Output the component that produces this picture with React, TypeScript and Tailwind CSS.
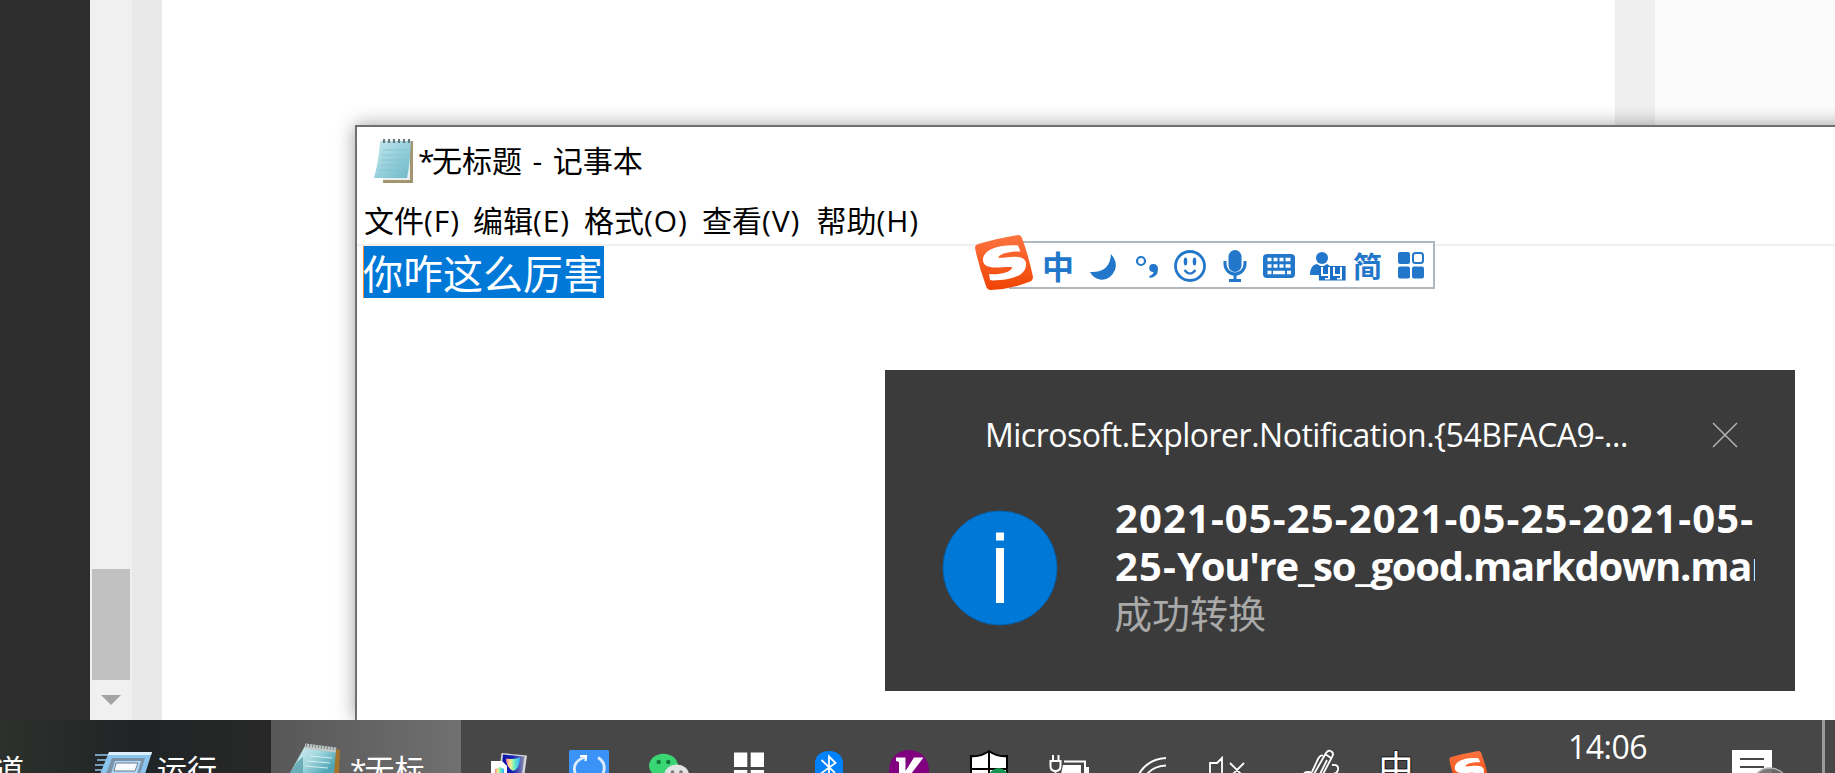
import type { ReactNode } from "react";

const UI_FONT = "font-['Open_Sans','Noto_Sans_CJK_SC',sans-serif]";

function NotepadIcon() {
  return (
    <svg className="size-full" viewBox="0 0 40 46">
      <defs>
        <linearGradient id="pad" x1="0" y1="0" x2="1" y2="1">
          <stop offset="0" stopColor="#c6e8ee" />
          <stop offset="0.5" stopColor="#97d0dc" />
          <stop offset="1" stopColor="#6db8c8" />
        </linearGradient>
      </defs>
      <path d="M10 4 L39 3 L39 45 L9 45 Z" fill="#a3956f" />
      <path d="M8 4 L36 4 L36 42 L9 42 Z" fill="#e8efee" />
      <path d="M6 3 L37 3 Q36 26 33 40 L0 40 Q5 22 6 3Z" fill="url(#pad)" />
      <path d="M9 12H33M8 17H32M8 22H32M7 27H31M6 32H31" stroke="#7fbecb" strokeWidth="0.7" />
      <path d="M10 1v4M15 1v4M20 1v4M25 1v4M30 1v4M35 1v4" stroke="#6b757c" strokeWidth="2.2" />
    </svg>
  );
}

function SogouLogo() {
  return (
    <svg className="size-full" viewBox="0 0 58 56">
      <defs>
        <linearGradient id="sogou" x1="0" y1="0" x2="0" y2="1">
          <stop offset="0" stopColor="#fd7440" />
          <stop offset="1" stopColor="#f04304" />
        </linearGradient>
      </defs>
      <path
        d="M3 9 Q24 3 43 0 Q46 0 47 3 Q54 22 58 42 Q58 46 54 47 Q36 54 16 55 Q12 55 11 51 Q4 32 0 13 Q0 10 3 9Z"
        fill="url(#sogou)"
      />
      <path
        d="M43 10.500 L45.500 16.500 C36 16 26 18 23 22.500 C29 24 49 17 51 28 C52 41 36 45 18 45.500 L15 45 L14 39 C23 40 35 38 37.500 32.500 C32 30 10 37 8 26 C7 14 25 9 43 10.500Z"
        fill="#fff"
      />
    </svg>
  );
}

function ImeBar() {
  return (
    <div className="absolute left-[975px] top-[235px] h-[56px] w-[460px]">
      <div className="ml-[34px] mt-[6px] flex h-[48px] w-[426px] border-2 border-[#b1b7bf] bg-white text-[#2277ca]">
        <div className="flex w-[94px] items-center pl-[31px] font-['Noto_Sans_CJK_SC',sans-serif] text-[32px] font-bold leading-[44px]">
          中
        </div>
        <svg className="-ml-[15px] h-[44px] w-[243px] shrink-0" viewBox="1090 243 243 44" fill="#2277ca">
          <path d="M1111 254 Q1118 262 1115 270 Q1110 281 1100 279.500 Q1093 278 1090 272 Q1110 273 1111 254Z" />
          <circle cx="1141" cy="261" r="4" fill="none" stroke="#2277ca" strokeWidth="2.2" />
          <path d="M1153 264 a4.5 4.5 0 0 1 5 5 Q1158 277 1150 278 L1149 276 Q1153 275 1153.500 272 a4 4 0 0 1-.5-8Z" />
          <circle cx="1190" cy="266" r="14.500" fill="none" stroke="#2277ca" strokeWidth="2.800" />
          <ellipse cx="1185.500" cy="261.500" rx="1.800" ry="4" />
          <ellipse cx="1194.500" cy="261.500" rx="1.800" ry="4" />
          <path d="M1184.500 270 Q1190 277 1195.500 270" fill="none" stroke="#2277ca" strokeWidth="2.200" />
          <rect x="1228.500" y="250" width="13" height="22" rx="6.500" />
          <path d="M1225 261 v3 a10 10 0 0 0 20 0 v-3 M1235 274 v6 M1229 280.500 h12" fill="none" stroke="#2277ca" strokeWidth="3" />
          <rect x="1263" y="254" width="32" height="24" rx="4" />
          <path
            d="M1267.500 259.500h4M1273.500 259.500h4M1279.500 259.500h4M1285.500 259.500h5M1267.500 266h4M1273.500 266h4M1279.500 266h4M1285.500 266h5M1267.500 272.500h4M1273 272.500h12M1287 272.500h4"
            stroke="#fff"
            strokeWidth="3.300"
          />
          <circle cx="1322" cy="258" r="6" />
          <path d="M1310 275 Q1310 265 1317 264 L1322 267 L1327 264 Q1332 266 1333 275Z" />
        </svg>
        <svg className="h-[44px] w-[16px] shrink-0" viewBox="1333 243 16 44" overflow="visible">
          <path d="M1319 266.500h26v13.500h-26z" fill="#1b6fc4" />
          <path d="M1322 267v8h6M1329 267v12h-4M1334 267v8h6M1341 267v12h-4" fill="none" stroke="#fff" strokeWidth="2" />
          <path d="M1319.500 266.500h25.500v13.500h-25.500z" fill="none" stroke="#1b6fc4" strokeWidth="1.200" />
        </svg>
        <div className="flex w-[45px] items-center pl-[4px] font-['Noto_Sans_CJK_SC',sans-serif] text-[29px] font-bold leading-[44px]">
          简
        </div>
        <svg className="ml-[2px] h-[44px] w-[30px] shrink-0" viewBox="1396 243 30 44" fill="#2277ca">
          <rect x="1398" y="252" width="12" height="12" rx="2" />
          <rect x="1413" y="253" width="10" height="10" rx="2.500" fill="none" stroke="#2277ca" strokeWidth="2" />
          <rect x="1398" y="266.500" width="12" height="12" rx="2" />
          <rect x="1412" y="266.500" width="12" height="12" rx="2" />
        </svg>
      </div>
      <div className="absolute left-0 top-0 h-[56px] w-[58px]">
        <SogouLogo />
      </div>
    </div>
  );
}

function Notification() {
  return (
    <div className="absolute left-[885px] top-[370px] flex h-[321px] w-[910px] flex-col bg-[#3b3b3b] text-white">
      <div className="flex h-[124px] items-start pl-[100px] pt-[43px]">
        <div className="w-[727px] whitespace-nowrap text-[32px] leading-[44px] tracking-[-0.5px]">
          Microsoft.Explorer.Notification.{"{"}54BFACA9-...
        </div>
        <svg className="mt-[9px] size-[26px]" viewBox="0 0 26 26">
          <path d="M1 1L25 25M25 1L1 25" stroke="#b4b4b4" strokeWidth="1.500" />
        </svg>
      </div>
      <div className="flex pl-[57px]">
        <svg className="mt-[16px] size-[116px] shrink-0" viewBox="0 0 116 116">
          <circle cx="58" cy="58" r="57" fill="#0078d7" stroke="#0062b1" />
          <path d="M54 22.500h8v8h-8zM54 38h8v55h-8z" fill="#fff" />
        </svg>
        <div className="ml-[57px] w-[640px] overflow-hidden whitespace-nowrap">
          <div className="text-[40px] font-bold leading-[47.500px] tracking-[1.1px]">2021-05-25-2021-05-25-2021-05-</div>
          <div className="text-[40px] font-bold leading-[47.500px] tracking-[-1.25px]">
            <span className="tracking-[1.1px]">25-</span>You're_so_good.markdown.markdown
          </div>
          <div className="-ml-[1px] text-[38px] leading-[48px] text-[#a9a9a9]">成功转换</div>
        </div>
      </div>
    </div>
  );
}

function MenuItem({ label, mnemonic }: { label: string; mnemonic: string }) {
  return (
    <div>
      {label}
      <span className="tracking-[0.9px]">({mnemonic})</span>
    </div>
  );
}

function NotepadWindow() {
  return (
    <div className="absolute bottom-0 left-[355px] right-[-20px] top-[125px] flex flex-col border-l-2 border-t-2 border-[#6f6f6f] bg-white text-black shadow-[0_0_18px_rgba(0,0,0,0.38)]">
      <div className="flex h-[70px] items-center pl-[17px]">
        <div className="-mt-[2px] h-[46px] w-[40px]">
          <NotepadIcon />
        </div>
        <div className="-mt-[2px] ml-[4px] flex whitespace-pre text-[30px] leading-[40px]">
          <span className="-mr-[2.5px]">*</span>
          <span className="[word-spacing:2.8px]">无标题 - 记事本</span>
        </div>
      </div>
      <div className="grid h-[49px] grid-cols-[109px_111px_118px_114.5px_auto] items-center whitespace-nowrap border-b-2 border-[#f0f0f0] pl-[7px] text-[30px] leading-[40px]">
        <MenuItem label="文件" mnemonic="F" />
        <MenuItem label="编辑" mnemonic="E" />
        <MenuItem label="格式" mnemonic="O" />
        <MenuItem label="查看" mnemonic="V" />
        <MenuItem label="帮助" mnemonic="H" />
      </div>
      <div className="flex pl-[6px]">
        <div className="h-[52px] w-[241px] whitespace-nowrap border-l border-[#ff8728] bg-[#0078d7] text-[40px] leading-[56px] text-white">
          <span className="-ml-[1px]">你咋这么厉害</span>
        </div>
      </div>
    </div>
  );
}

function Slot({ children }: { children: ReactNode }) {
  return (
    <svg className="h-[53px] w-[80px] shrink-0" viewBox="0 0 80 53">
      {children}
    </svg>
  );
}

function Tray() {
  return (
    <div className="flex w-[1040px]">
      <Slot>
        <defs>
          <linearGradient id="rgb" x1="0" x2="1">
            <stop offset="0" stopColor="#ff7a9a" />
            <stop offset="0.3" stopColor="#ffec8a" />
            <stop offset="0.6" stopColor="#6cf0c0" />
            <stop offset="1" stopColor="#35a9ff" />
          </linearGradient>
          <linearGradient id="screen" x1="0" x2="1">
            <stop offset="0" stopColor="#0a12a0" />
            <stop offset="0.5" stopColor="#1420b8" />
            <stop offset="1" stopColor="#8d90a8" />
          </linearGradient>
        </defs>
        <path d="M32.500 33L58 35.500L55.500 54H30Z" fill="#d4d6d8" />
        <path d="M34 34.500L55.500 36.500L53 54H32Z" fill="url(#screen)" />
        <path d="M37 38.500 Q43 40 51 37.500 Q51 49 44 51 Q37 47 37 38.500Z" fill="url(#rgb)" />
        <path d="M22 41h11l5 5v8H22z" fill="#fff" />
        <path d="M26 49l5-2 4 2v5h-9z" fill="url(#rgb)" />
      </Slot>
      <Slot>
        <rect x="20" y="30" width="40" height="30" rx="1.500" fill="#3b92f7" />
        <path d="M26.500 54 Q22 42 36 37M49 37.500 Q58 43 54 54" fill="none" stroke="#dcecff" strokeWidth="2.800" />
        <path d="M31 36L37 36L36.500 41" fill="none" stroke="#fff" strokeWidth="2.200" />
      </Slot>
      <Slot>
        <ellipse cx="34.500" cy="45.700" rx="14.500" ry="12" fill="#3ad674" />
        <circle cx="29.700" cy="42" r="2.200" fill="#147a3c" />
        <circle cx="39.300" cy="42" r="2.200" fill="#147a3c" />
        <ellipse cx="47.700" cy="54.500" rx="12.300" ry="10" fill="#e3e3e3" />
        <circle cx="43.500" cy="52" r="1.800" fill="#7b7b7b" />
        <circle cx="52" cy="52" r="1.800" fill="#7b7b7b" />
      </Slot>
      <Slot>
        <path d="M25 32.500h13.300v14.500H25zM41.700 32.500H55v14.500H41.700zM25 50h13.300v5H25zM41.700 50H55v5H41.700z" fill="#fff" />
      </Slot>
      <Slot>
        <rect x="26" y="31" width="28" height="44" rx="13" ry="12" fill="#0082fc" />
        <path d="M32.500 40L46 53M32 53.500L46.500 43L40 36.500V54" fill="none" stroke="#fff" strokeWidth="1.800" />
      </Slot>
      <Slot>
        <circle cx="40" cy="50" r="20" fill="#800080" />
        <path d="M27 37.500h9.500V51L45 37.500H54.500L42 54H30V42L27 41Z" fill="#fff" />
      </Slot>
      <Slot>
        <path d="M22 36Q32 37 40 31Q48 37 58 36V54H22Z" fill="#fff" stroke="#000" strokeWidth="2" />
        <path d="M40 31V54M22 49H58" stroke="#000" strokeWidth="2" />
        <circle cx="49.500" cy="58" r="10" fill="#189550" />
      </Slot>
      <Slot>
        <g fill="none" stroke="#fff" strokeWidth="2">
          <path d="M24 35v6M29.500 35v6M21.500 41h10v5q0 5-5 5t-5-5zM26.500 51v3M35 41.500H56V54" />
        </g>
        <path d="M34 45h18v9H32zM57 47h3v7h-3z" fill="#fff" />
      </Slot>
      <Slot>
        <path d="M30 54Q39 39 57 38M38 54Q45 46 57 45.500" fill="none" stroke="#fff" strokeWidth="2" />
      </Slot>
      <Slot>
        <path d="M21 54V43h7l5-5V54M41 43L55 57M55 43L41 57" fill="none" stroke="#fff" strokeWidth="1.800" />
      </Slot>
      <Slot>
        <g fill="none" stroke="#fff" strokeWidth="1.800">
          <path d="M45 54L57 33Q60 29 63 32Q65 34 63 37L54 54M56 34l6 4M51 54l7-14" />
          <path d="M54 36Q52 34 49 39L43 52M35 53Q39 51 43 53M63 45Q70 44 69 50Q68 54 63 54" />
        </g>
      </Slot>
      <div className="flex h-[53px] w-[80px] shrink-0 justify-center overflow-hidden pl-[14px] pt-[28px] font-['Noto_Sans_CJK_SC',sans-serif] text-[35px] leading-[36px] [text-shadow:1px_1px_0_#222,-1px_-1px_0_#222,1px_-1px_0_#222,-1px_1px_0_#222]">
        中
      </div>
      <div className="h-[53px] w-[80px] shrink-0 overflow-hidden pl-[20px] pt-[31px]">
        <div className="h-[38px] w-[40px]">
          <SogouLogo />
        </div>
      </div>
    </div>
  );
}

function Taskbar() {
  return (
    <div className="flex h-[53px] shrink-0 overflow-hidden bg-[#474747] text-white">
      <div className="flex w-[271px] items-start whitespace-nowrap bg-linear-to-r from-[#2d312d] via-[#202425] to-[#282828] text-[30px] leading-[40px]">
        <div className="flex w-[95px] justify-start pt-[30px]">
          <span className="-ml-[6px]">道</span>
        </div>
        <svg className="mt-[32px] h-[21px] w-[57px] shrink-0" viewBox="0 0 57 21">
          <path d="M0 3h18M2 8h14M0 13h12M0 18h10" stroke="#8dbbe4" strokeWidth="2" opacity="0.8" />
          <path d="M14 0H57L50 22H5Z" fill="#8cc4f0" />
          <path d="M14 0H57L56 3H13Z" fill="#deeffc" />
          <path d="M17 6H50L45 22H11Z" fill="#7d93a8" />
          <path d="M20 9H46L42 22H16Z" fill="#add9fb" />
          <path d="M21 11H43L40 19H19Z" fill="#f8fbff" stroke="#6c7c8c" />
        </svg>
        <div className="pl-[5px] pt-[30px]">运行</div>
      </div>
      <div className="flex w-[190px] items-start whitespace-nowrap bg-linear-to-r from-[#575757] to-[#707070] text-[30px] leading-[40px]">
        <svg className="ml-[19px] mt-[23px] h-[30px] w-[53px] shrink-0" viewBox="0 0 53 30">
          <defs>
            <linearGradient id="sheet" x1="0" y1="0" x2="1" y2="0.600">
              <stop offset="0.2" stopColor="#c9e8ec" />
              <stop offset="0.55" stopColor="#a5d9e0" />
              <stop offset="1" stopColor="#4fa5b4" />
            </linearGradient>
          </defs>
          <path d="M45 6L50 7L49 30H40Z" fill="#a4742c" />
          <path d="M15 3L46 7L44 30H0Z" fill="url(#sheet)" />
          <path d="M13 14V30H0L7 19Z" fill="#4e9aa6" opacity="0.7" />
          <path d="M20 13L42 15M17 18L40 20M15 23L38 25" stroke="#d5eff2" strokeWidth="1" />
          <path d="M15 3L46 7" stroke="#c3c9c8" strokeWidth="5" />
          <path d="M16 2L46 6" stroke="#7d8585" strokeWidth="3" strokeDasharray="1.2 1.800" />
        </svg>
        <div className="flex pl-[7px] pt-[30px]">
          <span className="-mr-[2px]">*</span>无标
        </div>
      </div>
      <div className="ml-[8px]">
        <Tray />
      </div>
      <div className="w-[197px] pt-[5px] text-center text-[32px] leading-[44px]">
        <span className="tracking-[-0.5px]">14:06</span>
      </div>
      <svg className="ml-[2px] h-[53px] w-[127px] shrink-0" viewBox="1708 0 127 53">
        <path d="M1732 30h40v30h-40z" fill="#fff" />
        <path d="M1740 39h24M1740 47h24" stroke="#474747" strokeWidth="2" />
        <circle cx="1770" cy="66" r="18" fill="#6a6a6a" fillOpacity="0.9" stroke="#b5b5b5" strokeWidth="1.300" />
        <path d="M1822 0h3v53h-3z" fill="#9a9a9a" />
      </svg>
    </div>
  );
}

export default function App() {
  return (
    <div className={`flex h-[773px] w-[1835px] flex-col overflow-hidden ${UI_FONT}`}>
      <div className="relative flex h-[720px] shrink-0 overflow-hidden bg-white">
        <div className="w-[90px] bg-[#2d2d2d]" />
        <div className="flex w-[42px] flex-col items-center bg-[#f0f0f0] pt-[569px]">
          <div className="h-[111px] w-[38px] bg-[#c1c1c1]" />
          <svg className="mt-[15px] h-[10px] w-[20px]" viewBox="0 0 20 10">
            <path d="M0 0H20L10 10Z" fill="#a3a3a3" />
          </svg>
        </div>
        <div className="w-[30px] bg-[#e9e9e9]" />
        <div className="w-[1453px] bg-white" />
        <div className="w-[40px] bg-[#efefef]" />
        <div className="grow bg-[#fbfbfb]" />
        <NotepadWindow />
        <ImeBar />
        <Notification />
      </div>
      <Taskbar />
    </div>
  );
}
